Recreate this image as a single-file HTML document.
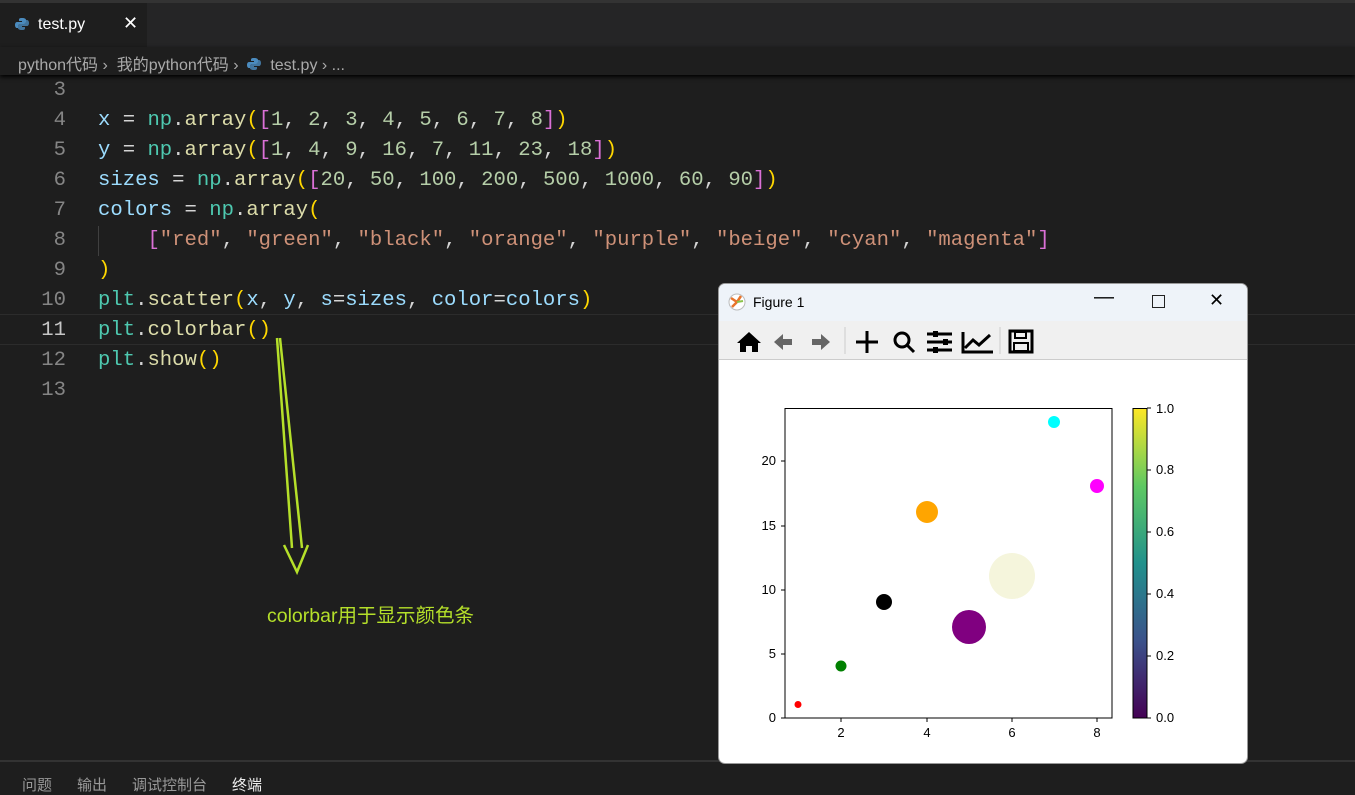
<!DOCTYPE html>
<html><head><meta charset="utf-8"><style>
body{margin:0;width:1355px;height:788px;background:#1e1e1e;overflow:hidden;position:relative;font-family:"Liberation Sans","Noto Sans CJK SC",sans-serif}
.top{position:absolute;left:0;top:0;width:1355px;height:3px;background:#333}
.tabbar{position:absolute;left:0;top:3px;width:1355px;height:44px;background:#252526}
.tab{position:absolute;left:0;top:0;width:147px;height:44px;background:#1e1e1e;color:#fff;font-size:16px}
.crumb{position:absolute;left:0;top:47px;width:1355px;height:28px;background:#1e1e1e;color:#aaa;font-size:16px;box-shadow:0 2px 4px #000}
.code{position:absolute;left:0;top:76px;font-family:"Liberation Mono","Noto Sans CJK SC",monospace;font-size:20.6px}
.ln{position:absolute;width:66px;text-align:right;color:#858585;height:30px;line-height:30px}
.cl{position:absolute;left:98px;white-space:pre;height:30px;line-height:30px;color:#d4d4d4}
.v{color:#9cdcfe}.m{color:#4ec9b0}.f{color:#dcdcaa}.n{color:#b5cea8}.s{color:#ce9178}.y{color:#ffd700}.p{color:#da70d6}
.win{position:absolute;left:718px;top:283px;width:528px;height:479px;background:#fff;border:1px solid #999;border-radius:7px;overflow:hidden}
.title{height:37px;background:#eef3f9;font-size:14px;position:relative}
.tb{height:38px;background:#f0f0f0;border-bottom:1px solid #ccc;position:relative}
</style></head><body>
<div class="top"></div>
<div class="tabbar"><div class="tab"><svg style="position:absolute;left:15px;top:14px" width="14" height="14" viewBox="0 0 14 14"><path d="M7 1C4 1 4 2 4 3v1h3v1H2C1 5 0 6 0 8s1 3 2 3h1V9c0-1 1-2 2-2h4c1 0 2-1 2-2V3c0-1-1-2-4-2z" fill="#4b8bbe"/><path d="M7 13c3 0 3-1 3-2v-1H7V9h5c1 0 2-1 2-3s-1-3-2-3h-1v2c0 1-1 2-2 2H5c-1 0-2 1-2 2v2c0 1 1 2 4 2z" fill="#4b8bbe" opacity=".8"/></svg><span style="position:absolute;left:38px;top:13px">test.py</span><span style="position:absolute;left:123px;top:10px;font-size:18px">✕</span></div></div>
<div class="crumb"><span style="position:absolute;left:18px;top:4px;white-space:pre">python代码 ›  我的python代码 ›  <svg width="14" height="14" viewBox="0 0 14 14" style="vertical-align:-1px"><path d="M7 1C4 1 4 2 4 3v1h3v1H2C1 5 0 6 0 8s1 3 2 3h1V9c0-1 1-2 2-2h4c1 0 2-1 2-2V3c0-1-1-2-4-2z" fill="#4b8bbe"/><path d="M7 13c3 0 3-1 3-2v-1H7V9h5c1 0 2-1 2-3s-1-3-2-3h-1v2c0 1-1 2-2 2H5c-1 0-2 1-2 2v2c0 1 1 2 4 2z" fill="#4b8bbe" opacity=".8"/></svg>  test.py › ...</span></div>
<div style="position:absolute;left:0;top:314px;width:1355px;height:29px;border-top:1px solid #2c2c2c;border-bottom:1px solid #2c2c2c"></div>
<div class="code">
<div class="ln" style="top:0">3</div>
<div class="ln" style="top:30px">4</div><div class="cl" style="top:30px"><span class="v">x</span> = <span class="m">np</span>.<span class="f">array</span><span class="y">(</span><span class="p">[</span><span class="n">1</span>, <span class="n">2</span>, <span class="n">3</span>, <span class="n">4</span>, <span class="n">5</span>, <span class="n">6</span>, <span class="n">7</span>, <span class="n">8</span><span class="p">]</span><span class="y">)</span></div>
<div class="ln" style="top:60px">5</div><div class="cl" style="top:60px"><span class="v">y</span> = <span class="m">np</span>.<span class="f">array</span><span class="y">(</span><span class="p">[</span><span class="n">1</span>, <span class="n">4</span>, <span class="n">9</span>, <span class="n">16</span>, <span class="n">7</span>, <span class="n">11</span>, <span class="n">23</span>, <span class="n">18</span><span class="p">]</span><span class="y">)</span></div>
<div class="ln" style="top:90px">6</div><div class="cl" style="top:90px"><span class="v">sizes</span> = <span class="m">np</span>.<span class="f">array</span><span class="y">(</span><span class="p">[</span><span class="n">20</span>, <span class="n">50</span>, <span class="n">100</span>, <span class="n">200</span>, <span class="n">500</span>, <span class="n">1000</span>, <span class="n">60</span>, <span class="n">90</span><span class="p">]</span><span class="y">)</span></div>
<div class="ln" style="top:120px">7</div><div class="cl" style="top:120px"><span class="v">colors</span> = <span class="m">np</span>.<span class="f">array</span><span class="y">(</span></div>
<div class="ln" style="top:150px">8</div><div class="cl" style="top:150px">    <span class="p">[</span><span class="s">"red"</span>, <span class="s">"green"</span>, <span class="s">"black"</span>, <span class="s">"orange"</span>, <span class="s">"purple"</span>, <span class="s">"beige"</span>, <span class="s">"cyan"</span>, <span class="s">"magenta"</span><span class="p">]</span></div>
<div class="ln" style="top:180px">9</div><div class="cl" style="top:180px"><span class="y">)</span></div>
<div class="ln" style="top:210px">10</div><div class="cl" style="top:210px"><span class="m">plt</span>.<span class="f">scatter</span><span class="y">(</span><span class="v">x</span>, <span class="v">y</span>, <span class="v">s</span>=<span class="v">sizes</span>, <span class="v">color</span>=<span class="v">colors</span><span class="y">)</span></div>
<div class="ln" style="top:240px;color:#c6c6c6">11</div><div class="cl" style="top:240px"><span class="m">plt</span>.<span class="f">colorbar</span><span class="y">()</span></div>
<div class="ln" style="top:270px">12</div><div class="cl" style="top:270px"><span class="m">plt</span>.<span class="f">show</span><span class="y">()</span></div>
<div class="ln" style="top:300px">13</div>
</div>
<div style="position:absolute;left:98px;top:226px;width:1px;height:30px;background:#404040"></div>
<svg style="position:absolute;left:0;top:0" width="700" height="700"><g fill="none" stroke="#b5e02a" stroke-width="2.5"><path d="M277 338L292 548M280 338L302 548M284 545L297 572L308 545"/></g></svg>
<div style="position:absolute;left:267px;top:599px;color:#b5e02a;font-size:19.5px">colorbar用于显示颜色条</div>
<div style="position:absolute;left:0;top:760px;width:1355px;height:2px;background:#333"></div>
<div style="position:absolute;left:22px;top:774px;color:#999;font-size:15px;white-space:pre">问题      输出      调试控制台      <span style="color:#eee">终端</span></div>
<div class="win">
<div class="title"><svg style="position:absolute;left:9px;top:9px" width="18" height="18"><circle cx="9" cy="9" r="8" fill="#fff" stroke="#bbb"/><path d="M9 9L3 5M9 9L4 14M9 9L13 3" stroke="#e8742b" stroke-width="2.5"/><path d="M9 9L15 8" stroke="#8bc34a" stroke-width="2"/></svg><span style="position:absolute;left:34px;top:10px">Figure 1</span><span style="position:absolute;left:375px;top:2px;font-size:20px">—</span><span style="position:absolute;left:433px;top:11px;width:11px;height:11px;border:1.3px solid #222"></span><span style="position:absolute;left:490px;top:6px;font-size:18px">✕</span></div>
<div class="tb"><svg width="320" height="38"><g fill="#000"><path d="M18 22l12-11 12 11h-3v9h-6v-6h-6v6h-6v-9z"/><path d="M55 21l9-8v5h9v6h-9v5z" fill="#666"/><path d="M111 21l-9-8v5h-9v6h9v5z" fill="#666"/></g><line x1="126" y1="6" x2="126" y2="33" stroke="#ccc"/><g stroke="#000" stroke-width="3" fill="none"><path d="M148 10v22M137 21h22"/><circle cx="183" cy="19" r="7"/><path d="M188 24l7 7"/><path d="M208 13h25M208 21h25M208 29h25"/><path d="M244 11v20h30M246 27l8-8 6 5 11-10"/><rect x="291" y="10" width="22" height="21"/><rect x="296" y="11" width="11" height="6" stroke-width="2"/><rect x="295" y="22" width="14" height="8" stroke-width="2"/></g><g fill="#000"><rect x="214" y="10" width="5" height="6"/><rect x="224" y="18" width="5" height="6"/><rect x="214" y="26" width="5" height="6"/></g><line x1="281" y1="6" x2="281" y2="33" stroke="#ccc"/></svg></div>
<svg style="position:absolute;left:0;top:0" width="529" height="479" font-family="Liberation Sans" font-size="13"><g transform="translate(-719,-284)">
<rect x="785" y="408.5" width="327" height="309.5" fill="none" stroke="#000"/>
<circle cx="798" cy="704.5" r="3.5" fill="red"/><circle cx="841" cy="666" r="5.5" fill="green"/><circle cx="884" cy="602" r="8" fill="#000"/><circle cx="927" cy="512" r="11" fill="orange"/><circle cx="969" cy="627" r="17" fill="purple"/><circle cx="1012" cy="576" r="23" fill="#f5f5dc"/><circle cx="1054" cy="422" r="6" fill="cyan"/><circle cx="1097" cy="486" r="7" fill="magenta"/>
<g stroke="#000"><path d="M841 718v4M927 718v4M1012 718v4M1097 718v4M785 718h-4M785 654h-4M785 590h-4M785 526h-4M785 461h-4"/></g>
<g text-anchor="middle"><text x="841" y="737">2</text><text x="927" y="737">4</text><text x="1012" y="737">6</text><text x="1097" y="737">8</text></g>
<g text-anchor="end"><text x="776" y="722">0</text><text x="776" y="658">5</text><text x="776" y="594">10</text><text x="776" y="530">15</text><text x="776" y="465">20</text></g>
<defs><linearGradient id="g" x1="0" y1="1" x2="0" y2="0"><stop offset="0" stop-color="#440154"/><stop offset=".25" stop-color="#3b528b"/><stop offset=".5" stop-color="#21918c"/><stop offset=".75" stop-color="#5ec962"/><stop offset="1" stop-color="#fde725"/></linearGradient></defs>
<rect x="1133" y="408.5" width="14" height="309.5" fill="url(#g)" stroke="#000"/>
<g stroke="#000"><path d="M1147 718h4M1147 656h4M1147 594h4M1147 532h4M1147 470h4M1147 408h4"/></g>
<text x="1156" y="722">0.0</text><text x="1156" y="660">0.2</text><text x="1156" y="598">0.4</text><text x="1156" y="536">0.6</text><text x="1156" y="474">0.8</text><text x="1156" y="413">1.0</text>
</g></svg>
</div>
</body></html>
